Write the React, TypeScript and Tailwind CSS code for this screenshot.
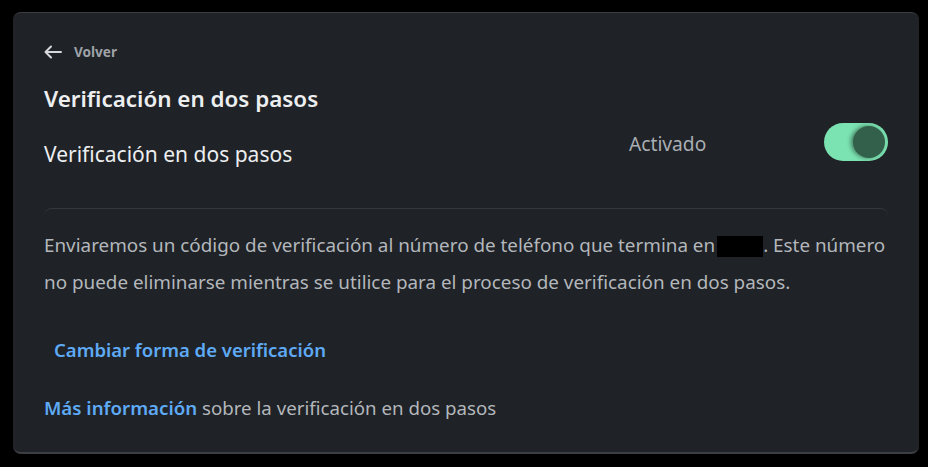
import React from "react";

export default function App() {
  return (
    <div className="w-[928px] h-[467px] bg-black overflow-hidden" style={{ fontFamily: '"Noto Sans", "Open Sans", sans-serif' }}>
      <div className="ml-[13px] mt-[12px] w-[906px] h-[442px] rounded-[8px] bg-[#1f2226] border-t border-[#3a3d42] border-b-2 border-b-[#3b3e43] pl-[31px] pr-[31px]">
        <div className="flex items-center gap-[12px] pt-[28px] h-[50px]">
          <svg width="18" height="14" viewBox="0 0 18 14" fill="none" stroke="#d6d8db" strokeWidth="2" strokeLinecap="round" strokeLinejoin="round">
            <path d="M17 7H1.5M7 1.5L1.5 7L7 12.5" />
          </svg>
          <span className="text-[13.6px] font-bold text-[#9ea2a8] leading-none">Volver</span>
        </div>
        <h1 className="mt-[21px] text-[22.4px] leading-[30px] font-semibold text-[#eceef0]">Verificación en dos pasos</h1>
        <div className="flex items-start h-[94px]">
          <div className="flex-1 mt-[25px] text-[21px] leading-[30px] text-[#eceef0]">Verificación en dos pasos</div>
          <div className="text-[19.2px] leading-[28px] text-[#a9aeb4] mt-[16px] w-[195px]">Activado</div>
          <div className="w-[64px] h-[38px] rounded-full bg-[#7be2b1] relative mt-[9px]">
            <div className="absolute right-[3px] top-[3px] w-[32px] h-[32px] rounded-full bg-[#33604a] shadow-[-2px_0_4px_rgba(0,0,0,0.45)]" />
          </div>
        </div>
        <div className="h-[15px] border-t border-[#34373b] rounded-t-[8px]" />
        <p className="text-[18.85px] leading-[37px] text-[#b3b7bc] mt-[4px] whitespace-nowrap">
          Enviaremos un código de verificación al número de teléfono que termina en
          <span className="inline-block align-middle w-[46px] h-[21px] bg-black ml-[2px]" />
          . Este número
          <br />
          no puede eliminarse mientras se utilice para el proceso de verificación en dos pasos.
        </p>
        <div className="mt-[36px] pl-[10px] text-[18.5px] leading-[26px] font-semibold text-[#5eaaf5]">Cambiar forma de verificación</div>
        <div className="mt-[32px] text-[18.7px] leading-[26px] text-[#b3b7bc] whitespace-nowrap">
          <span className="font-semibold text-[#5eaaf5]">Más información</span> sobre la verificación en dos pasos
        </div>
      </div>
    </div>
  );
}
